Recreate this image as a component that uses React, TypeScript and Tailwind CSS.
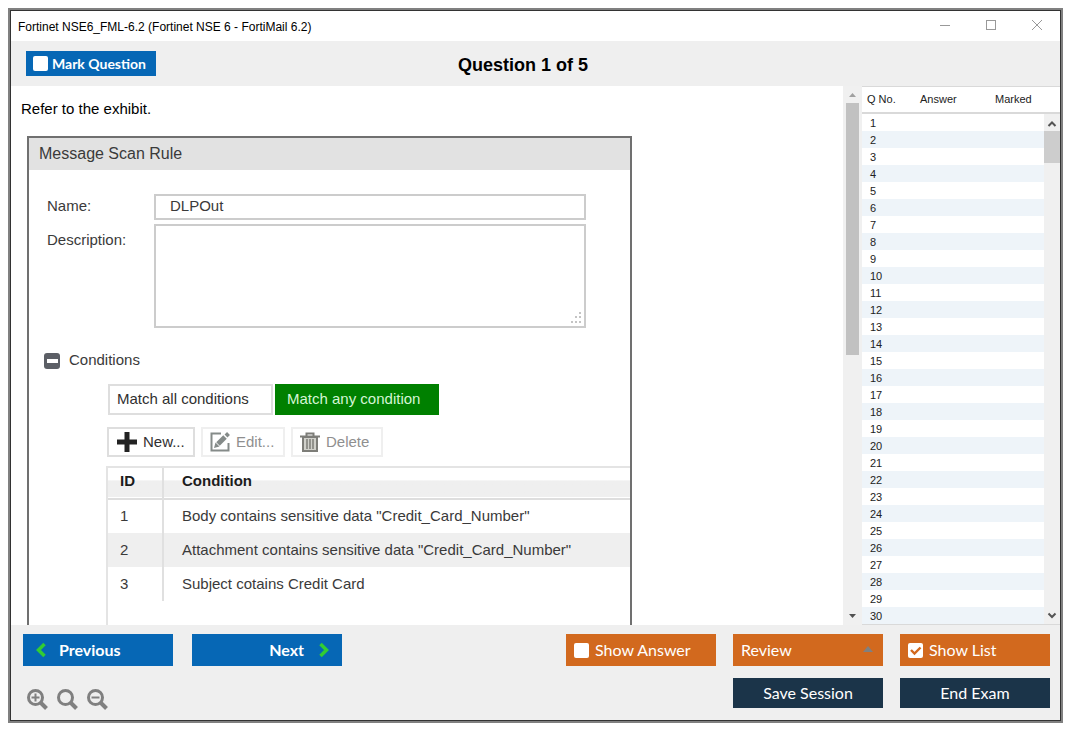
import { useState } from "react";
import type { ReactNode } from "react";

const questions = Array.from({ length: 30 }, (_, i) => i + 1);

const conditions = [
  { id: 1, text: 'Body contains sensitive data "Credit_Card_Number"' },
  { id: 2, text: 'Attachment contains sensitive data "Credit_Card_Number"' },
  { id: 3, text: "Subject cotains Credit Card" },
];

interface CheckProps {
  id: string;
  label: string;
  checked: boolean;
  onChange: (value: boolean) => void;
  className: string;
}

function CheckButton({ id, label, checked, onChange, className }: CheckProps) {
  return (
    <label htmlFor={id} className={`flex items-center cursor-pointer text-white ${className}`}>
      <span className="relative flex">
        <input
          id={id}
          type="checkbox"
          checked={checked}
          onChange={(e) => onChange(e.target.checked)}
          className="appearance-none size-[15px] rounded-xs bg-white"
        />
        {checked && (
          <svg viewBox="0 0 15 15" className="absolute inset-0 size-[15px] pointer-events-none" fill="none" stroke="#d2691e" strokeWidth="2.4">
            <path d="M3 7 L6.5 10.5 L12.5 4.5" />
          </svg>
        )}
      </span>
      {label}
    </label>
  );
}

function TitleBar() {
  return (
    <header className="flex items-center justify-between h-[30px] pl-[7px] pr-[17px] bg-white">
      <h1 className="pt-px text-[12px] text-black">Fortinet NSE6_FML-6.2 (Fortinet NSE 6 - FortiMail 6.2)</h1>
      <div className="flex gap-[34px] text-[#999999]">
        <button aria-label="Minimize">
          <svg width="12" height="12" fill="none" stroke="currentColor">
            <path d="M1 5.5 H11" />
          </svg>
        </button>
        <button aria-label="Maximize">
          <svg width="12" height="12" fill="none" stroke="currentColor">
            <rect x="1.5" y="0.5" width="9" height="9" />
          </svg>
        </button>
        <button aria-label="Close">
          <svg width="12" height="12" fill="none" stroke="currentColor">
            <path d="M1 0 L11 10 M11 0 L1 10" />
          </svg>
        </button>
      </div>
    </header>
  );
}

function ToolButton({ label, disabled, className, children }: { label: string; disabled?: boolean; className: string; children: ReactNode }) {
  return (
    <button
      disabled={disabled}
      className={`flex items-center gap-1.5 h-[30px] border-2 whitespace-nowrap ${
        disabled ? "pl-[7px] border-[#efefef] text-[#8f8f8f]" : "pl-2 border-[#dedede] text-[#303030]"
      } ${className}`}
    >
      {children}
      {label}
    </button>
  );
}

function Exhibit() {
  return (
    <div className="flex-1 flex flex-col w-[605px] max-w-full border-2 border-b-0 border-[#707070] text-[15px] text-[#3a3a3a]">
      <h3 className="h-8 pl-2.5 leading-8 bg-[#e2e2e2] text-[16px]">Message Scan Rule</h3>

      <div className="mt-6 pl-[18px] flex">
        <label htmlFor="rule-name" className="w-[107px] leading-6">Name:</label>
        <input id="rule-name" defaultValue="DLPOut" className="w-[432px] h-[26px] pl-3.5 pb-1 border-2 border-[#cccccc]" />
      </div>
      <div className="mt-1 pl-[18px] flex">
        <label htmlFor="rule-description" className="w-[107px] pt-1 leading-6">Description:</label>
        <span className="relative flex">
          <textarea id="rule-description" className="w-[432px] h-[104px] resize-none border-2 border-[#cccccc]" />
          <svg viewBox="0 0 12 12" className="absolute right-1 bottom-1 size-3" fill="#c4c4c4">
            <path d="M9 0h2v2H9z M5 4h2v2H5z M9 4h2v2H9z M1 9h2v2H1z M5 9h2v2H5z M9 9h2v2H9z" />
          </svg>
        </span>
      </div>

      <div className="mt-5 pl-[15px] flex items-center gap-2 h-6">
        <button aria-label="Collapse conditions">
          <svg width="17" height="17">
            <rect x="0" y="1" width="16" height="16" rx="3" fill="#5c5f66" />
            <rect x="3" y="7" width="11" height="4" fill="#ffffff" />
          </svg>
        </button>
        <h4>Conditions</h4>
      </div>

      <div className="mt-3 pl-[79px] flex gap-0.5">
        <button className="w-[165px] h-[31px] pl-[7px] text-left border-2 border-[#dedede] text-[#303030]">Match all conditions</button>
        <button className="w-[164px] h-[31px] pl-3 text-left bg-[#008000] text-[#d5f5d5]">Match any condition</button>
      </div>

      <div className="mt-3 pl-[78px] flex gap-1.5">
        <ToolButton label="New..." className="w-[88px]">
          <svg width="20" height="20" className="shrink-0">
            <path d="M7.5 0 H12.5 V7.5 H20 V12.5 H12.5 V20 H7.5 V12.5 H0 V7.5 H7.5 Z" fill="#222222" />
          </svg>
        </ToolButton>
        <ToolButton label="Edit..." disabled className="w-[84px]">
          <svg width="20" height="20" className="shrink-0" fill="none" stroke="#858b89">
            <path d="M11 1.5 H1.5 V18.5 H18.5 V11" strokeWidth="2" />
            <path d="M8 12 L15 5" strokeWidth="5" />
            <path d="M16 4 L18.5 1.5" strokeWidth="4" />
            <path d="M4 16 L5.5 10.5 L9.5 14.5 Z" fill="#858b89" stroke="none" />
          </svg>
        </ToolButton>
        <ToolButton label="Delete" disabled className="w-[92px]">
          <svg width="20" height="20" className="shrink-0" stroke="#7d7d78">
            <path d="M3 5 H17 V19 H3 Z" fill="#d0d0ca" strokeWidth="2" />
            <path d="M0 4.5 H20 M6.5 4 V1.5 H13.5 V4" fill="none" strokeWidth="2" />
            <path d="M7 7 V17 M10 7 V17 M13 7 V17" strokeWidth="1.5" />
          </svg>
        </ToolButton>
      </div>

      <div className="flex-1 mt-[9px] ml-[77px] border-l-2 border-t-2 border-[#e4e4e4]">
        <table className="w-full text-left">
          <thead>
            <tr className="h-[31px] border-b-2 border-[#dedede] bg-linear-to-b from-white from-40% to-[#efefef] to-45% text-[#1c1c1c]">
              <th className="w-[55px] pl-3 pb-1 leading-6 border-r-2 border-[#e0e0e0]">ID</th>
              <th className="pl-[18px] pb-1 leading-6">Condition</th>
            </tr>
          </thead>
          <tbody>
            {conditions.map((c) => (
              <tr key={c.id} className="h-[34px] even:bg-[#efefef]">
                <td className="pl-3 border-r-2 border-[#e0e0e0]">{c.id}</td>
                <td className="pl-[18px]">{c.text}</td>
              </tr>
            ))}
          </tbody>
        </table>
      </div>
    </div>
  );
}

function QuestionList() {
  return (
    <aside className="flex w-[198px] shrink-0 border-b border-[#d9d9d9] bg-white text-[11px] text-[#222222]">
      <table className="flex-1 table-fixed border-separate border-spacing-0">
        <thead>
          <tr className="text-left">
            <th className="w-[58px] h-7 pl-[5px] pb-px border-t border-b-2 border-[#d9d9d9] font-normal">Q No.</th>
            <th className="w-[75px] h-7 pb-px border-t border-b-2 border-[#d9d9d9] font-normal">Answer</th>
            <th className="h-7 pb-px border-t border-b-2 border-[#d9d9d9] font-normal">Marked</th>
          </tr>
        </thead>
        <tbody>
          {questions.map((q) => (
            <tr key={q} className="h-[17px] even:bg-[#eef4f9] leading-4">
              <td className="pl-2 pt-px">{q}</td>
              <td />
              <td />
            </tr>
          ))}
        </tbody>
      </table>
      <div className="flex flex-col w-4">
        <div className="h-7 border-t border-b-2 border-[#d9d9d9]" />
        <div className="flex-1 flex flex-col items-center bg-[#f0f0f0] text-[#555555]">
          <svg width="16" height="17" fill="none" stroke="currentColor" strokeWidth="2">
            <path d="M4.5 12 L8 8.5 L11.5 12" />
          </svg>
          <div className="w-full h-8 bg-[#cdcdcd]" />
          <svg width="16" height="17" fill="none" stroke="currentColor" strokeWidth="2" className="mt-auto">
            <path d="M4.5 6.5 L8 10 L11.5 6.5" />
          </svg>
        </div>
      </div>
    </aside>
  );
}

function Zoom({ label, sign }: { label: string; sign: string }) {
  return (
    <button aria-label={label}>
      <svg width="22" height="22" fill="none" stroke="#808080">
        <circle cx="8.5" cy="8.5" r="7" strokeWidth="3" />
        <path d="M13.5 13.5 L19.5 19.5" strokeWidth="4" />
        <path d={sign} strokeWidth="2" />
      </svg>
    </button>
  );
}

export default function App() {
  const [marked, setMarked] = useState(false);
  const [showAnswer, setShowAnswer] = useState(false);
  const [showList, setShowList] = useState(true);

  return (
    <div className="bg-white pt-2 pl-2 pr-3 pb-3 font-['Liberation_Sans',Arial,sans-serif]">
      <div className="border-2 border-[#808080]">
        <div className="border border-[#333333] bg-[#efefef]">
          <TitleBar />

          {/* Toolbar */}
          <div className="grid grid-cols-[1fr_auto_1fr] items-center h-[45px] pl-[15px] pr-10">
            <CheckButton
              id="mark"
              label="Mark Question"
              checked={marked}
              onChange={setMarked}
              className="w-[130px] h-[25px] pl-[7px] gap-1 bg-[#0667b5] font-['Lato',sans-serif] text-[14px] font-bold whitespace-nowrap"
            />
            <h2 className="pt-1 text-[18px] font-bold text-black">Question 1 of 5</h2>
          </div>

          {/* Question and list */}
          <main className="flex">
            <section className="flex-1 min-w-0 flex flex-col pt-3 px-4 bg-white overflow-hidden">
              <p className="-ml-1.5 mb-[15px] h-[23px] leading-[22px] text-[15px] text-black">Refer to the exhibit.</p>
              <Exhibit />
            </section>
            <div className="flex flex-col items-center w-[19px] bg-[#f0f0f0]">
              <svg width="13" height="17">
                <path d="M3 11 L6.5 7 L10 11 Z" fill="#a0a0a0" />
              </svg>
              <div className="w-[13px] h-[252px] bg-[#c1c1c1]" />
              <svg width="13" height="17" className="mt-auto">
                <path d="M3 6 L6.5 10 L10 6 Z" fill="#505050" />
              </svg>
            </div>
            {showList && <QuestionList />}
          </main>

          {/* Bottom bar */}
          <footer className="flex justify-between pt-[9px] pb-[9px] pl-3 pr-2.5 font-['Lato',sans-serif] text-[16px] text-white">
            <div className="flex flex-col gap-[23px]">
              <div className="flex gap-[19px] font-bold">
                <button className="flex items-center gap-3 w-[150px] h-8 pl-3 bg-[#0667b5]">
                  <svg width="12" height="16" fill="none" stroke="#32cd32" strokeWidth="3.5">
                    <path d="M9.5 2 L3.5 8 L9.5 14" />
                  </svg>
                  Previous
                </button>
                <button className="flex items-center justify-end gap-3.5 w-[150px] h-8 pr-3 bg-[#0667b5]">
                  Next
                  <svg width="12" height="16" fill="none" stroke="#32cd32" strokeWidth="3.5">
                    <path d="M2.5 2 L8.5 8 L2.5 14" />
                  </svg>
                </button>
              </div>
              <div className="flex gap-2 h-[22px] pl-1">
                <Zoom label="Zoom in" sign="M4.5 8.5 H12.5 M8.5 4.5 V12.5" />
                <Zoom label="Reset zoom" sign="" />
                <Zoom label="Zoom out" sign="M4.5 8.5 H12.5" />
              </div>
            </div>

            <div className="grid grid-cols-[150px_150px_150px] content-start gap-x-[17px] gap-y-3">
              <CheckButton id="show-answer" label="Show Answer" checked={showAnswer} onChange={setShowAnswer} className="h-8 gap-1.5 pl-2 bg-[#d2691e]" />
              <div className="relative h-8">
                <select aria-label="Review" className="appearance-none size-full pl-2 bg-[#d2691e]">
                  <option>Review</option>
                </select>
                <svg width="10" height="6" className="absolute right-2.5 top-3 pointer-events-none">
                  <path d="M0 6 L5 0 L10 6 Z" fill="#808080" />
                </svg>
              </div>
              <CheckButton id="show-list" label="Show List" checked={showList} onChange={setShowList} className="h-8 gap-1.5 pl-2 bg-[#d2691e]" />
              <button className="col-start-2 h-[30px] bg-[#1b3449]">Save Session</button>
              <button className="h-[30px] bg-[#1b3449]">End Exam</button>
            </div>
          </footer>
        </div>
      </div>
    </div>
  );
}
